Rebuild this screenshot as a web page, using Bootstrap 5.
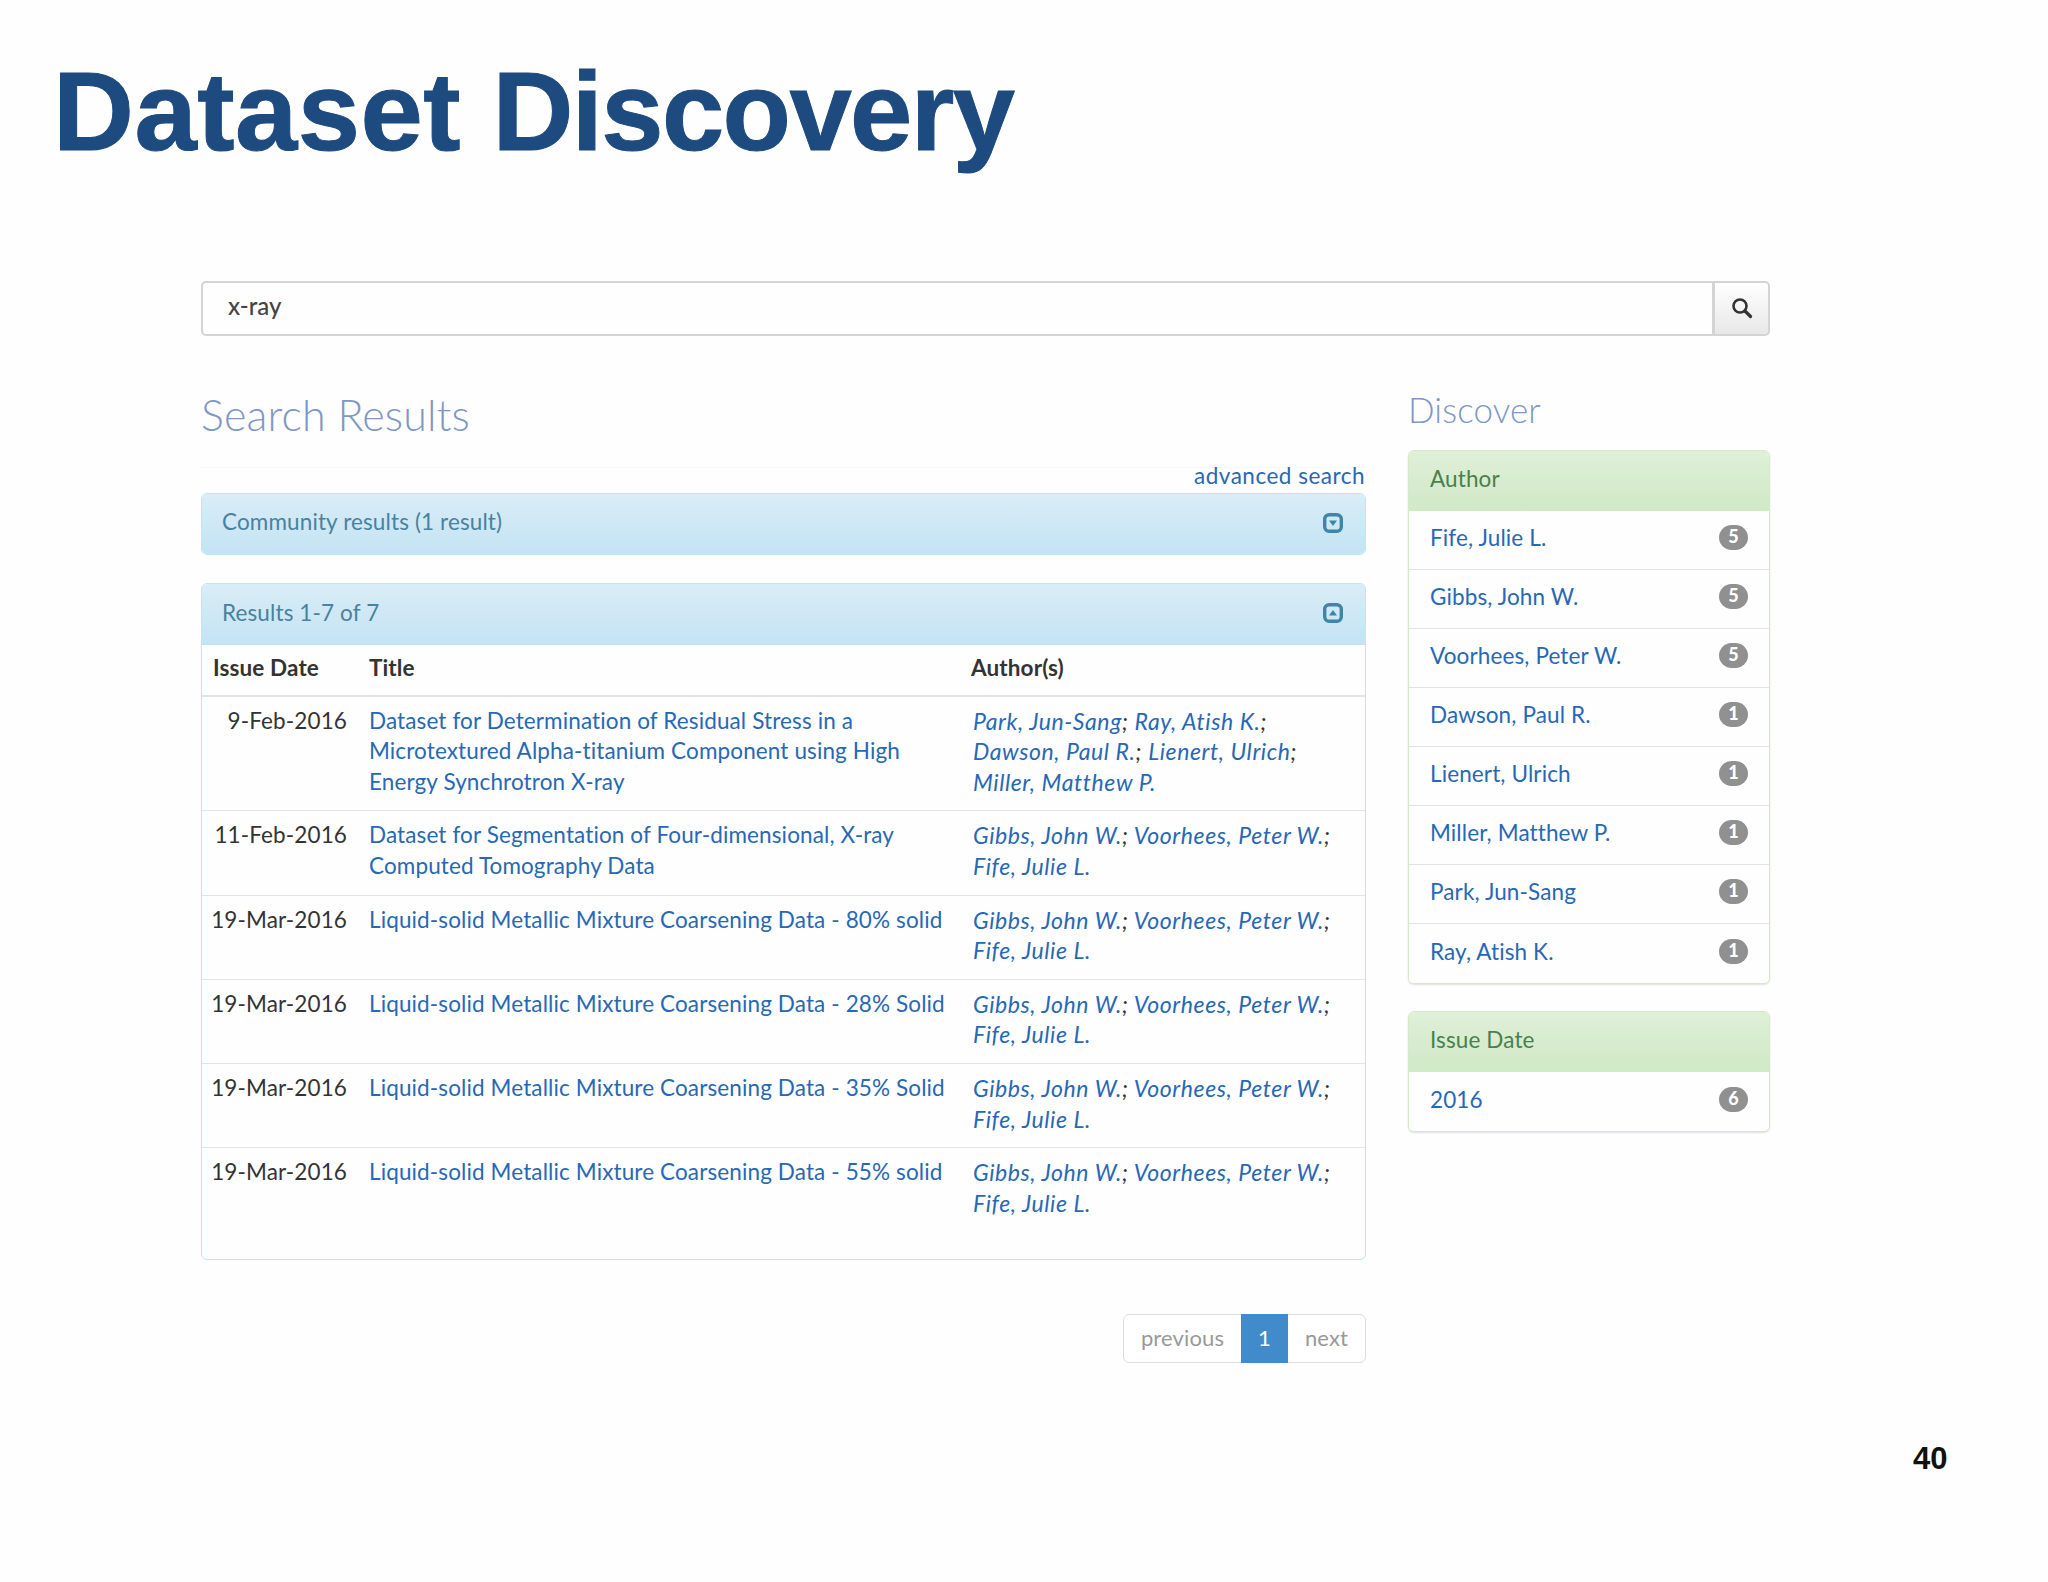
<!DOCTYPE html>
<html lang="en">
<head>
  <meta charset="UTF-8" />
  <title>Dataset Discovery</title>
  <link href="https://cdn.jsdelivr.net/npm/bootstrap@5.3.3/dist/css/bootstrap.min.css" rel="stylesheet">
  <style>
    body { background: #fefefe; font-family: Lato, "Open Sans", sans-serif; font-size: 22.5px; letter-spacing: .12px; font-variant-ligatures: none; line-height: 30.6px; color: #333; height: 1582px; overflow: hidden; }
    a { color: #2768b5; text-decoration: none; }
    .slide-title { font-family: "Liberation Sans", Arial, sans-serif; font-weight: 700; font-size: 112px; line-height: 130px; color: #1d4a7f; -webkit-text-stroke: 1px #1d4a7f; margin: 47px 0 0 53px; }
    .title-first { letter-spacing: .5px; }
    .title-second { letter-spacing: -1.6px; }
    .slide-body { margin: 104px 278px 0 201px; }
    .search-box { height: 55px; }
    .search-box .form-control { font-size: 24px; font-weight: 500; padding: 0 25px 5px; border: 2px solid #d4d4d4; border-radius: 5px 0 0 5px; color: #444; background: #fefefe; }
    .search-box .btn { width: 57px; padding: 0 0 4px; border: 2px solid #d4d4d4; border-radius: 0 5px 5px 0; background: linear-gradient(#fff, #e8e8e8); }
    .main-col { width: 1165px; }
    .side-col { width: 362px; }
    .results-head { font-size: 43px; font-weight: 300; color: #7f97c6; line-height: 56px; margin: 0; height: 80px; padding-top: 51px; box-sizing: content-box; border-bottom: 1px solid #f7f7f7; }
    .discover-head { font-size: 35px; font-weight: 300; color: #7f97c6; line-height: 46px; margin: 0; padding-top: 50px; height: 114px; }
    .adv-link { text-align: right; height: 27px; line-height: 20px; margin-top: -2px; padding-right: 1px; letter-spacing: .5px; }
    .info-panel { border: 1px solid #bce8f1; border-radius: 6px; margin-bottom: 28px; background: #fefefe; }
    .info-panel .card-header { background: linear-gradient(#d9edf7, #c4e3f3); color: #48829f; border: 0; height: 60px; padding: 0 22px 3px 20px; border-radius: 5px 5px 0 0; display: flex; align-items: center; justify-content: space-between; }
    .info-panel .collapsed-head { border-radius: 5px; }
    .info-panel .open-head { height: 61px; }
    .results-table { table-layout: fixed; margin-bottom: 28px; --bs-table-bg: transparent; }
    .results-table th { font-weight: 700; color: #333; padding: 8px 11px 11px; height: 50.5px; border-bottom: 2px solid #e3e3e3; }
    .results-table td { padding: 9px 11px 13px; border-bottom: 1px solid #e3e3e3; border-top: 0; color: #333; }
    .results-table tr:last-child td { border-bottom: 0; }
    .col-date { width: 156px; }
    .col-title { width: 602px; }
    .results-table td.cell-date { text-align: right; padding-right: 11px; padding-left: 0; }
    .results-table th:first-child { padding-left: 11px; padding-right: 0; }
    .author-cell { font-style: italic; font-size: 23px; letter-spacing: .6px; padding-left: 13px !important; }
    .pager-row { margin-top: 54px; }
    .pager-row .page-link { font-size: 22px; line-height: 30px; padding: 8px 17px; height: 49px; color: #999; border-color: #ddd; background: #fff; }
    .pager-row .page-item.active .page-link { background: #428bca; border-color: #428bca; color: #fff; padding: 8px 16px; }
    .facet-panel { border: 1px solid #d6e9c6; border-radius: 6px; margin-bottom: 27px; box-shadow: 0 1px 2px rgba(0,0,0,.12); }
    .facet-panel .card-header { background: linear-gradient(#dff0d8, #d0e9c6); color: #4b7f4c; border: 0; height: 60px; padding: 0 21px 4px; display: flex; align-items: center; }
    .facet-panel .list-group-item { height: 59px; padding: 0 21px 3px; display: flex; align-items: center; justify-content: space-between; border-color: #e3e3e3; background: #fefefe; }
    .count-pill { background: #909090; color: #fff; width: 29px; height: 25px; border-radius: 13px; font-size: 18px; font-weight: 900; line-height: 22px; text-align: center; padding: 0; margin-top: -2px; }
    .page-num { position: absolute; left: 1913px; top: 1440px; font-family: "Liberation Sans", Arial, sans-serif; font-weight: 700; font-size: 31px; line-height: 38px; color: #111; }
  </style>
</head>
<body>
  <h1 class="slide-title"><span class="title-first">Dataset</span> <span class="title-second">Discovery</span></h1>

  <div class="slide-body">
    <form class="input-group search-box">
      <input class="form-control" type="text" value="x-ray">
      <button class="btn" type="button" aria-label="Search">
        <svg width="22" height="22" viewBox="0 0 22 22" fill="none" stroke="#333" stroke-width="2.6"><circle cx="9" cy="9" r="6.5"/><path d="M14 14 L19.5 19.5" stroke-linecap="round" stroke-width="3.2"/></svg>
      </button>
    </form>

    <div class="d-flex justify-content-between">
      <div class="main-col">
        <h2 class="results-head">Search Results</h2>
        <div class="adv-link"><a href="#">advanced search</a></div>

        <div class="card info-panel">
          <div class="card-header collapsed-head">
            <span>Community results (1 result)</span>
            <svg width="20" height="20" viewBox="0 0 20 20"><rect x="1.7" y="1.7" width="16.6" height="16.6" rx="4.5" fill="none" stroke="#3d86a8" stroke-width="3.4"/><path d="M6 7.5 H14 L10 13 Z" fill="#3d86a8"/></svg>
          </div>
        </div>

        <div class="card info-panel">
          <div class="card-header open-head">
            <span>Results 1-7 of 7</span>
            <svg width="20" height="20" viewBox="0 0 20 20"><rect x="1.7" y="1.7" width="16.6" height="16.6" rx="4.5" fill="none" stroke="#3d86a8" stroke-width="3.4"/><path d="M6 12.5 H14 L10 7 Z" fill="#3d86a8"/></svg>
          </div>
          <table class="table results-table">
            <colgroup><col class="col-date"><col class="col-title"><col></colgroup>
            <thead>
              <tr><th>Issue Date</th><th>Title</th><th>Author(s)</th></tr>
            </thead>
            <tbody>
              <tr>
                <td class="cell-date">9-Feb-2016</td>
                <td><a href="#">Dataset for Determination of Residual Stress in a Microtextured Alpha-titanium Component using High Energy Synchrotron X-ray</a></td>
                <td class="author-cell"><a href="#">Park, Jun-Sang</a>; <a href="#">Ray, Atish K.</a>;<br><a href="#">Dawson, Paul R.</a>; <a href="#">Lienert, Ulrich</a>;<br><a href="#">Miller, Matthew P.</a></td>
              </tr>
              <tr>
                <td class="cell-date">11-Feb-2016</td>
                <td><a href="#">Dataset for Segmentation of Four-dimensional, X-ray Computed Tomography Data</a></td>
                <td class="author-cell"><a href="#">Gibbs, John W.</a>; <a href="#">Voorhees, Peter W.</a>;<br><a href="#">Fife, Julie L.</a></td>
              </tr>
              <tr>
                <td class="cell-date">19-Mar-2016</td>
                <td><a href="#">Liquid-solid Metallic Mixture Coarsening Data - 80% solid</a></td>
                <td class="author-cell"><a href="#">Gibbs, John W.</a>; <a href="#">Voorhees, Peter W.</a>;<br><a href="#">Fife, Julie L.</a></td>
              </tr>
              <tr>
                <td class="cell-date">19-Mar-2016</td>
                <td><a href="#">Liquid-solid Metallic Mixture Coarsening Data - 28% Solid</a></td>
                <td class="author-cell"><a href="#">Gibbs, John W.</a>; <a href="#">Voorhees, Peter W.</a>;<br><a href="#">Fife, Julie L.</a></td>
              </tr>
              <tr>
                <td class="cell-date">19-Mar-2016</td>
                <td><a href="#">Liquid-solid Metallic Mixture Coarsening Data - 35% Solid</a></td>
                <td class="author-cell"><a href="#">Gibbs, John W.</a>; <a href="#">Voorhees, Peter W.</a>;<br><a href="#">Fife, Julie L.</a></td>
              </tr>
              <tr>
                <td class="cell-date">19-Mar-2016</td>
                <td><a href="#">Liquid-solid Metallic Mixture Coarsening Data - 55% solid</a></td>
                <td class="author-cell"><a href="#">Gibbs, John W.</a>; <a href="#">Voorhees, Peter W.</a>;<br><a href="#">Fife, Julie L.</a></td>
              </tr>
            </tbody>
          </table>
        </div>

        <nav class="d-flex justify-content-end pager-row">
          <ul class="pagination mb-0">
            <li class="page-item disabled"><a class="page-link" href="#">previous</a></li>
            <li class="page-item active"><a class="page-link" href="#">1</a></li>
            <li class="page-item disabled"><a class="page-link" href="#">next</a></li>
          </ul>
        </nav>
      </div>

      <div class="side-col">
        <h3 class="discover-head">Discover</h3>
        <div class="card facet-panel">
          <div class="card-header">Author</div>
          <ul class="list-group list-group-flush">
            <li class="list-group-item"><a href="#">Fife, Julie L.</a><span class="badge count-pill">5</span></li>
            <li class="list-group-item"><a href="#">Gibbs, John W.</a><span class="badge count-pill">5</span></li>
            <li class="list-group-item"><a href="#">Voorhees, Peter W.</a><span class="badge count-pill">5</span></li>
            <li class="list-group-item"><a href="#">Dawson, Paul R.</a><span class="badge count-pill">1</span></li>
            <li class="list-group-item"><a href="#">Lienert, Ulrich</a><span class="badge count-pill">1</span></li>
            <li class="list-group-item"><a href="#">Miller, Matthew P.</a><span class="badge count-pill">1</span></li>
            <li class="list-group-item"><a href="#">Park, Jun-Sang</a><span class="badge count-pill">1</span></li>
            <li class="list-group-item"><a href="#">Ray, Atish K.</a><span class="badge count-pill">1</span></li>
          </ul>
        </div>
        <div class="card facet-panel">
          <div class="card-header">Issue Date</div>
          <ul class="list-group list-group-flush">
            <li class="list-group-item"><a href="#">2016</a><span class="badge count-pill">6</span></li>
          </ul>
        </div>
      </div>
    </div>
  </div>

  <div class="page-num">40</div>
  <script src="https://cdn.jsdelivr.net/npm/bootstrap@5.3.3/dist/js/bootstrap.bundle.min.js"></script>
</body>
</html>
